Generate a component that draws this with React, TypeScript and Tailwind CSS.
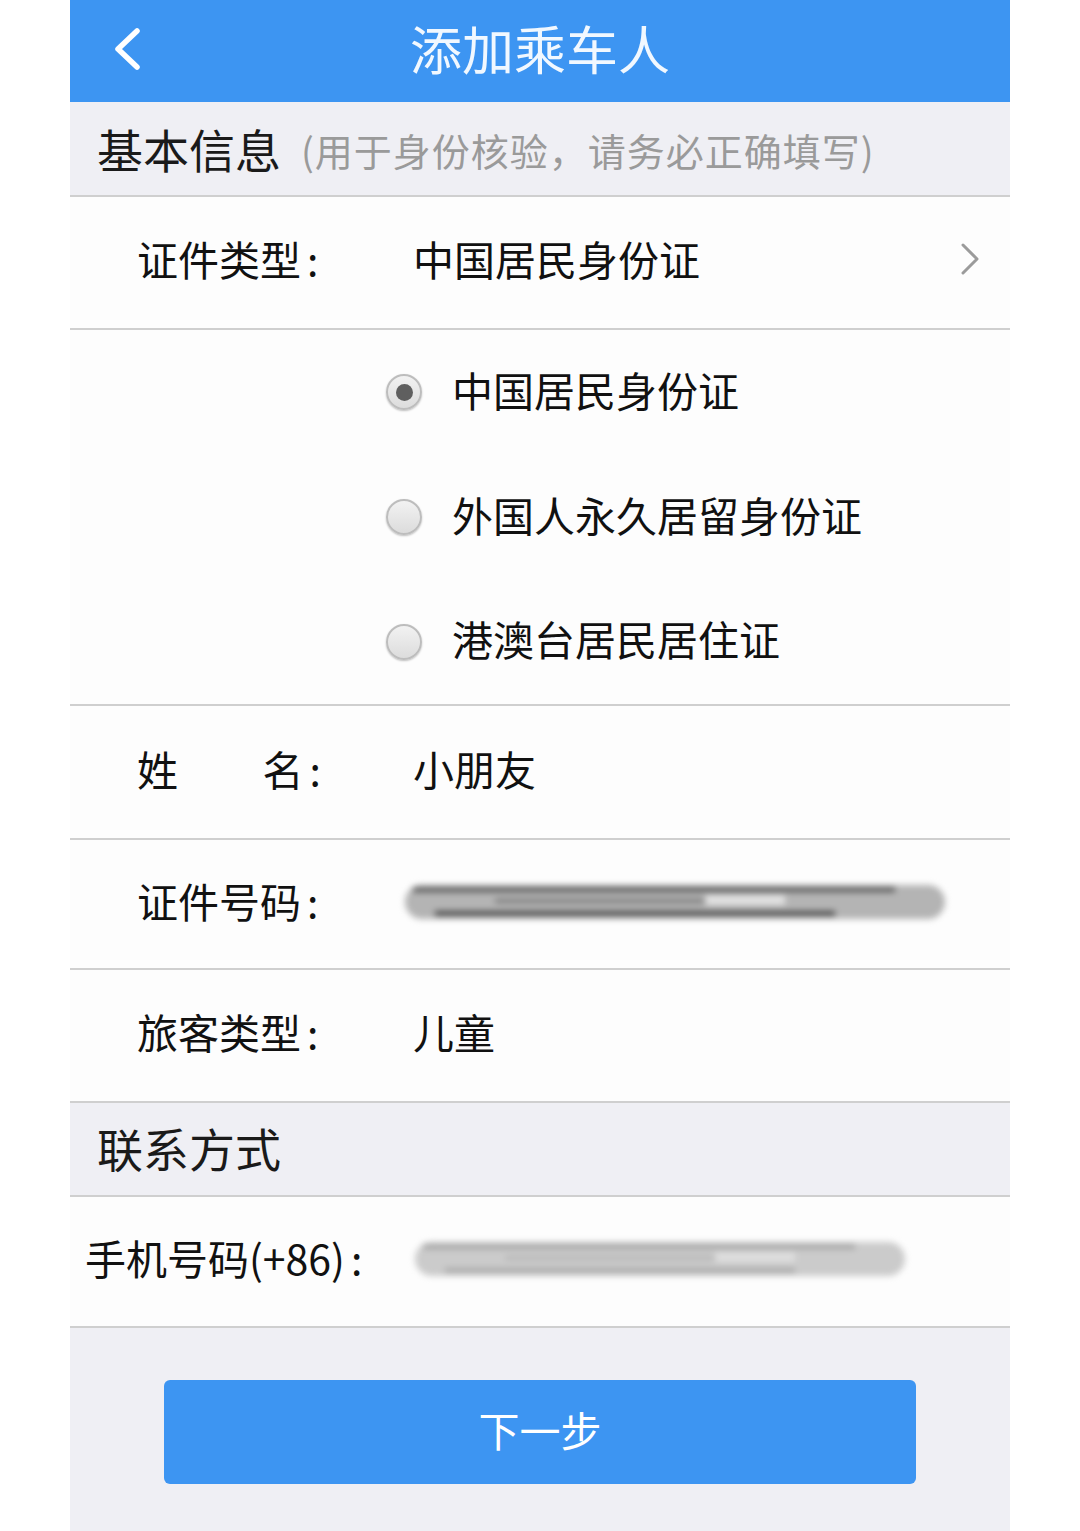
import { ReactNode } from "react";

const font = { fontFamily: '"Noto Sans CJK SC", "Noto Sans", sans-serif' };

function Row({ label, children, height }: { label: ReactNode; children?: ReactNode; height: string }) {
  return (
    <div className={`flex items-center border-b-2 border-[#cfcfcf] bg-[#fdfdfd] pb-[8px] ${height}`}>
      <div className="ml-[67px] w-[276px] shrink-0 text-[41px] leading-none text-[#111]">{label}</div>
      <div className="flex flex-1 items-center text-[41px] leading-none text-[#111]">{children}</div>
    </div>
  );
}

function Label({ text }: { text: string }) {
  return (
    <span className="flex items-center">
      {text}
      <span className="ml-[6px]">:</span>
    </span>
  );
}

function Radio({ checked, text }: { checked?: boolean; text: string }) {
  return (
    <div className="flex h-[125px] items-center">
      <div className="ml-[316px] flex h-[36px] w-[36px] items-center justify-center rounded-full border-2 border-[#bdbdbd] bg-[linear-gradient(#f2f2f2,#dcdcdc)] shadow-[0_1px_2px_rgba(0,0,0,0.25)]">
        {checked && <div className="h-[17px] w-[17px] rounded-full bg-[#5f5f5f]" />}
      </div>
      <span className="ml-[30px] -mt-[6px] text-[41px] leading-none text-[#111]">{text}</span>
    </div>
  );
}

function Blur({ width, tone }: { width: string; tone: "dark" | "light" }) {
  const dark = tone === "dark";
  return (
    <div className={`relative h-[44px] ${width} blur-[3px]`}>
      <div className={`absolute inset-x-0 top-[4px] h-[34px] rounded-full ${dark ? "bg-[#b4b4b4]" : "bg-[#cbcbcb]"}`} />
      <div className={`absolute left-[8px] right-[50px] top-[6px] h-[5px] ${dark ? "bg-[#5a5a5a]" : "bg-[#a5a5a5]"}`} />
      <div className={`absolute left-[30px] right-[110px] top-[30px] h-[5px] ${dark ? "bg-[#4a4a4a]" : "bg-[#aaaaaa]"}`} />
      <div className={`absolute left-[90px] right-[170px] top-[18px] h-[4px] ${dark ? "bg-[#777]" : "bg-[#b5b5b5]"}`} />
      <div className={`absolute left-[300px] w-[80px] top-[14px] h-[10px] ${dark ? "bg-[#e2e2e2]" : "bg-[#dedede]"}`} />
    </div>
  );
}

export default function App() {
  return (
    <div className="min-h-[1531px] w-[1080px] bg-white" style={font}>
      <div className="mx-auto flex min-h-[1531px] w-[940px] flex-col bg-[#efeff4]">
        {/* Header */}
        <div className="relative flex h-[102px] shrink-0 items-center justify-center bg-[#3d95f2] pb-[6px]">
          <svg className="absolute left-[41px] top-[27px]" width="32" height="44" viewBox="0 0 32 44" fill="none">
            <path d="M26 4 L7 22 L26 40" stroke="white" strokeWidth="5.5" strokeLinecap="round" strokeLinejoin="round" />
          </svg>
          <span className="text-[52px] leading-none text-[#f1f8ff]">添加乘车人</span>
        </div>

        {/* Basic info section */}
        <div className="flex h-[95px] shrink-0 items-center border-b-2 border-[#cfcfcf] bg-[#efeff4] pb-[2px]">
          <span className="ml-[27px] text-[46px] leading-none text-[#1a1a1a]">基本信息</span>
          <span className="ml-[20px] mt-[4px] text-[38px] leading-none tracking-[1px] text-[#9a9a9a]">
            (用于身份核验，请务必正确填写)
          </span>
        </div>

        <Row label={<Label text="证件类型" />} height="h-[133px]">
          <span className="flex-1">中国居民身份证</span>
          <svg className="mr-[29px]" width="22" height="34" viewBox="0 0 22 34" fill="none">
            <path d="M4 3 L18 17 L4 31" stroke="#9b9b9b" strokeWidth="3" strokeLinecap="round" strokeLinejoin="round" />
          </svg>
        </Row>

        <div className="flex h-[376px] shrink-0 flex-col justify-center border-b-2 border-[#cfcfcf] bg-[#fdfdfd]">
          <Radio checked text="中国居民身份证" />
          <Radio text="外国人永久居留身份证" />
          <Radio text="港澳台居民居住证" />
        </div>

        <Row
          label={
            <span className="flex w-[184px] justify-between">
              <span>姓</span>
              <span>
                名<span className="ml-[6px]">:</span>
              </span>
            </span>
          }
          height="h-[134px]"
        >
          小朋友
        </Row>

        <Row label={<Label text="证件号码" />} height="h-[130px]">
          <div className="-ml-[8px] mt-[6px]">
            <Blur width="w-[540px]" tone="dark" />
          </div>
        </Row>

        <Row label={<Label text="旅客类型" />} height="h-[133px]">
          儿童
        </Row>

        {/* Contact section */}
        <div className="flex h-[94px] shrink-0 items-center border-b-2 border-[#cfcfcf] bg-[#efeff4] pb-[4px]">
          <span className="ml-[27px] text-[46px] leading-none text-[#1a1a1a]">联系方式</span>
        </div>

        <div className="flex h-[131px] shrink-0 items-center border-b-2 border-[#cfcfcf] bg-[#fdfdfd] pb-[8px]">
          <span className="ml-[15px] flex w-[330px] items-center text-[41px] leading-none text-[#111]">
            手机号码(+86)<span className="ml-[6px]">:</span>
          </span>
          <div className="mt-[4px]">
            <Blur width="w-[490px]" tone="light" />
          </div>
        </div>

        {/* Footer */}
        <div className="flex flex-1 justify-center bg-[#efeff4] pt-[52px]">
          <button className="flex h-[104px] w-[752px] items-center justify-center rounded-[6px] bg-[#3d95f2] pb-[6px] text-[41px] leading-none text-white">
            下一步
          </button>
        </div>
      </div>
    </div>
  );
}
